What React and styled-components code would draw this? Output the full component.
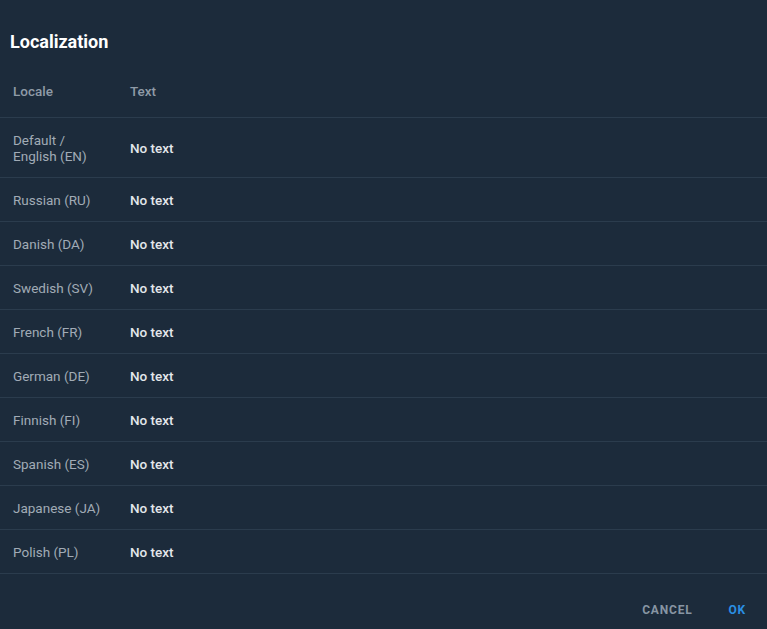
import styled, { createGlobalStyle } from "styled-components";

const GlobalStyle = createGlobalStyle`
    body {
        margin: 0;
        background: #1c2b3b;
        font-family: Roboto, "Liberation Sans", sans-serif;
    }
`;

const Dialog = styled.div`
    height: 629px;
    background: #1c2b3b;
    display: flex;
    flex-direction: column;
`;

const Title = styled.h2`
    margin: 0;
    padding: 30px 10px 10px;
    font-size: 18px;
    line-height: 24px;
    font-weight: 700;
    color: #ffffff;
`;

const Table = styled.div`
    display: flex;
    flex-direction: column;
`;

const Row = styled.div`
    display: grid;
    grid-template-columns: 130px 1fr;
    align-items: center;
    height: ${(p) => p.$height}px;
    border-bottom: 1px solid #2b3c4d;
    box-sizing: content-box;
`;

const HeadCell = styled.div`
    padding-left: ${(p) => (p.$first ? "13px" : "0")};
    padding-top: 1px;
    font-size: 13.5px;
    font-weight: 500;
    color: #8f9ba7;
`;

const LocaleCell = styled.div`
    padding-left: 13px;
    padding-right: 10px;
    font-size: 13.5px;
    line-height: 16px;
    color: #a1abb6;
`;

const TextCell = styled.div`
    font-size: 13.5px;
    font-weight: 500;
    color: #e3e7eb;
`;

const Footer = styled.div`
    display: flex;
    justify-content: flex-end;
    align-items: flex-start;
    padding: 28px 11px 0;
`;

const Button = styled.button`
    background: none;
    border: none;
    padding: 0 10px;
    margin-left: ${(p) => (p.$primary ? "16px" : "0")};
    font-family: inherit;
    font-size: 12px;
    line-height: 16px;
    font-weight: 700;
    letter-spacing: 0.8px;
    text-transform: uppercase;
    color: ${(p) => (p.$primary ? "#2a8fe4" : "#8795a3")};
    cursor: pointer;
`;

const locales = [
    "Russian (RU)",
    "Danish (DA)",
    "Swedish (SV)",
    "French (FR)",
    "German (DE)",
    "Finnish (FI)",
    "Spanish (ES)",
    "Japanese (JA)",
    "Polish (PL)",
];

export default function App() {
    return (
        <>
            <GlobalStyle />
            <Dialog>
                <Title>Localization</Title>
                <Table>
                    <Row $height={53}>
                        <HeadCell $first>Locale</HeadCell>
                        <HeadCell>Text</HeadCell>
                    </Row>
                    <Row $height={59}>
                        <LocaleCell>
                            Default /<br />
                            English (EN)
                        </LocaleCell>
                        <TextCell>No text</TextCell>
                    </Row>
                    {locales.map((l) => (
                        <Row key={l} $height={43}>
                            <LocaleCell>{l}</LocaleCell>
                            <TextCell>No text</TextCell>
                        </Row>
                    ))}
                </Table>
                <Footer>
                    <Button>Cancel</Button>
                    <Button $primary>OK</Button>
                </Footer>
            </Dialog>
        </>
    );
}
